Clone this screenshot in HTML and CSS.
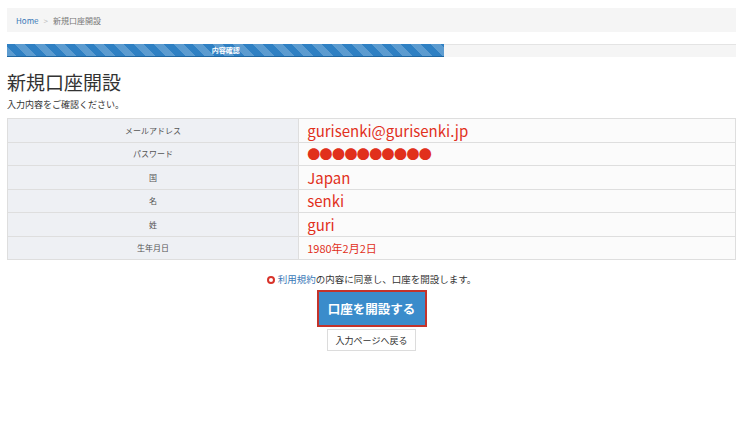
FILE: index.html
```html
<!DOCTYPE html>
<html lang="ja">
<head>
    <meta charset="UTF-8">
    <title>新規口座開設</title>
    <link rel="stylesheet" href="styles.css">
</head>
<body>
    <div class="breadcrumb">
        <a href="#" class="crumb-home">Home</a>
        <span class="crumb-sep">&gt;</span>
        <span class="crumb-current">新規口座開設</span>
    </div>

    <div class="progress">
        <div class="progress-bar">内容確認</div>
    </div>

    <h1>新規口座開設</h1>
    <p class="lead">入力内容をご確認ください。</p>

    <table class="confirm-table">
        <tr>
            <th>メールアドレス</th>
            <td class="big">gurisenki@gurisenki.jp</td>
        </tr>
        <tr>
            <th>パスワード</th>
            <td class="dots">●●●●●●●●●●</td>
        </tr>
        <tr>
            <th>国</th>
            <td class="big">Japan</td>
        </tr>
        <tr>
            <th>名</th>
            <td class="big">senki</td>
        </tr>
        <tr>
            <th>姓</th>
            <td class="big">guri</td>
        </tr>
        <tr>
            <th>生年月日</th>
            <td class="small">1980年2月2日</td>
        </tr>
    </table>

    <p class="agree"><span class="ring"></span><a href="#">利用規約</a>の内容に同意し、口座を開設します。</p>

    <div class="actions">
        <div class="submit-frame">
            <button type="button" class="submit-btn">口座を開設する</button>
        </div>
        <button type="button" class="back-btn">入力ページへ戻る</button>
    </div>
</body>
</html>
```

FILE: styles.css
```css
body {
    margin: 0;
    padding: 8px 10px 0 7px;
    font-family: "Noto Sans CJK JP", "Noto Sans", sans-serif;
    color: #333;
    background: #fff;
}

a {
    color: #3a79b8;
    text-decoration: none;
}

.breadcrumb {
    display: flex;
    align-items: center;
    height: 24px;
    padding: 0 9px;
    background-color: #f5f5f5;
    font-size: 8px;
}

.crumb-sep {
    color: #bbb;
    margin: 0 5px;
}

.crumb-current {
    color: #777;
}

.progress {
    margin-top: 12px;
    height: 13px;
    background-color: #f5f5f5;
    box-shadow: inset 0 1px 0 #e4e4e4;
}

.progress-bar {
    width: 60%;
    height: 13px;
    box-sizing: border-box;
    border-bottom: 1px solid #1f67a3;
    background-color: #2f80c3;
    background-image: repeating-linear-gradient(45deg, rgba(255,255,255,0.22) 0, rgba(255,255,255,0.22) 7px, transparent 7px, transparent 14px);
    color: #fff;
    font-size: 7px;
    font-weight: bold;
    line-height: 12px;
    text-align: center;
}

h1 {
    margin: 13px 0 0;
    font-size: 19px;
    font-weight: normal;
    line-height: 24px;
}

.lead {
    margin: 5px 0 0;
    font-size: 9px;
    line-height: 12px;
}

.confirm-table {
    width: 100%;
    margin-top: 7px;
    border-collapse: collapse;
}

.confirm-table th,
.confirm-table td {
    height: 22.5px;
    padding: 0;
    border: 1px solid #dedede;
}

.confirm-table th {
    width: 40%;
    background-color: #eef0f4;
    color: #555;
    font-size: 8px;
    font-weight: normal;
    text-align: center;
}

.confirm-table td {
    padding-left: 8px;
    background-color: #fbfbfb;
    color: #e1301c;
}

.confirm-table td.big {
    font-size: 15px;
}

.confirm-table td.dots {
    font-size: 13px;
    letter-spacing: -0.6px;
}

.confirm-table td.small {
    font-size: 11px;
}

.agree {
    margin: 13px 0 0;
    font-size: 9.5px;
    line-height: 12px;
    text-align: center;
}

.ring {
    display: inline-block;
    width: 4px;
    height: 4px;
    margin-right: 3px;
    border: 2.5px solid #d8332a;
    border-radius: 50%;
    vertical-align: -1px;
}

.actions {
    display: flex;
    flex-direction: column;
    align-items: center;
    margin-top: 5px;
}

.submit-frame {
    border: 2px solid #c3332b;
}

.submit-btn {
    display: block;
    width: 106px;
    height: 33px;
    border: none;
    background-color: #3a8ccb;
    color: #fff;
    font-family: inherit;
    font-size: 12.5px;
    font-weight: bold;
}

.back-btn {
    width: 89px;
    height: 22px;
    margin-top: 2px;
    border: 1px solid #dcdcdc;
    background-color: #fff;
    color: #333;
    font-family: inherit;
    font-size: 9px;
}
```
